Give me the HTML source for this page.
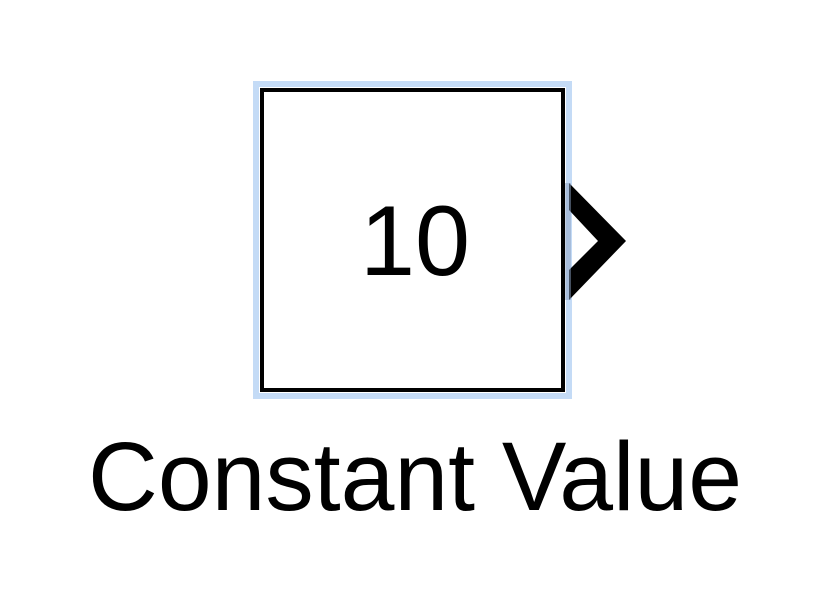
<!DOCTYPE html>
<html><head><style>
html,body{margin:0;padding:0;background:#fff;width:817px;height:590px;overflow:hidden}
</style></head><body>
<svg width="817" height="590" xmlns="http://www.w3.org/2000/svg" style="position:absolute;left:0;top:0">
<rect x="256" y="84" width="313" height="312" fill="none" stroke="#c4dbf6" stroke-width="6"/>
<rect x="262" y="90" width="301" height="300" fill="#fff" stroke="#000" stroke-width="4"/>
<polygon points="569,183 626,241 569,300 569,270 598,241 569,210" fill="#000"/>
<rect x="565" y="183" width="6" height="117" fill="#8aa0c0" opacity="0.5"/>
<text x="415" y="275" font-family="Liberation Sans, sans-serif" font-size="99" text-anchor="middle" fill="#000">10</text>
<text x="415" y="510" font-family="Liberation Sans, sans-serif" font-size="97" text-anchor="middle" fill="#000" textLength="654" lengthAdjust="spacingAndGlyphs">Constant Value</text>
</svg>
</body></html>
